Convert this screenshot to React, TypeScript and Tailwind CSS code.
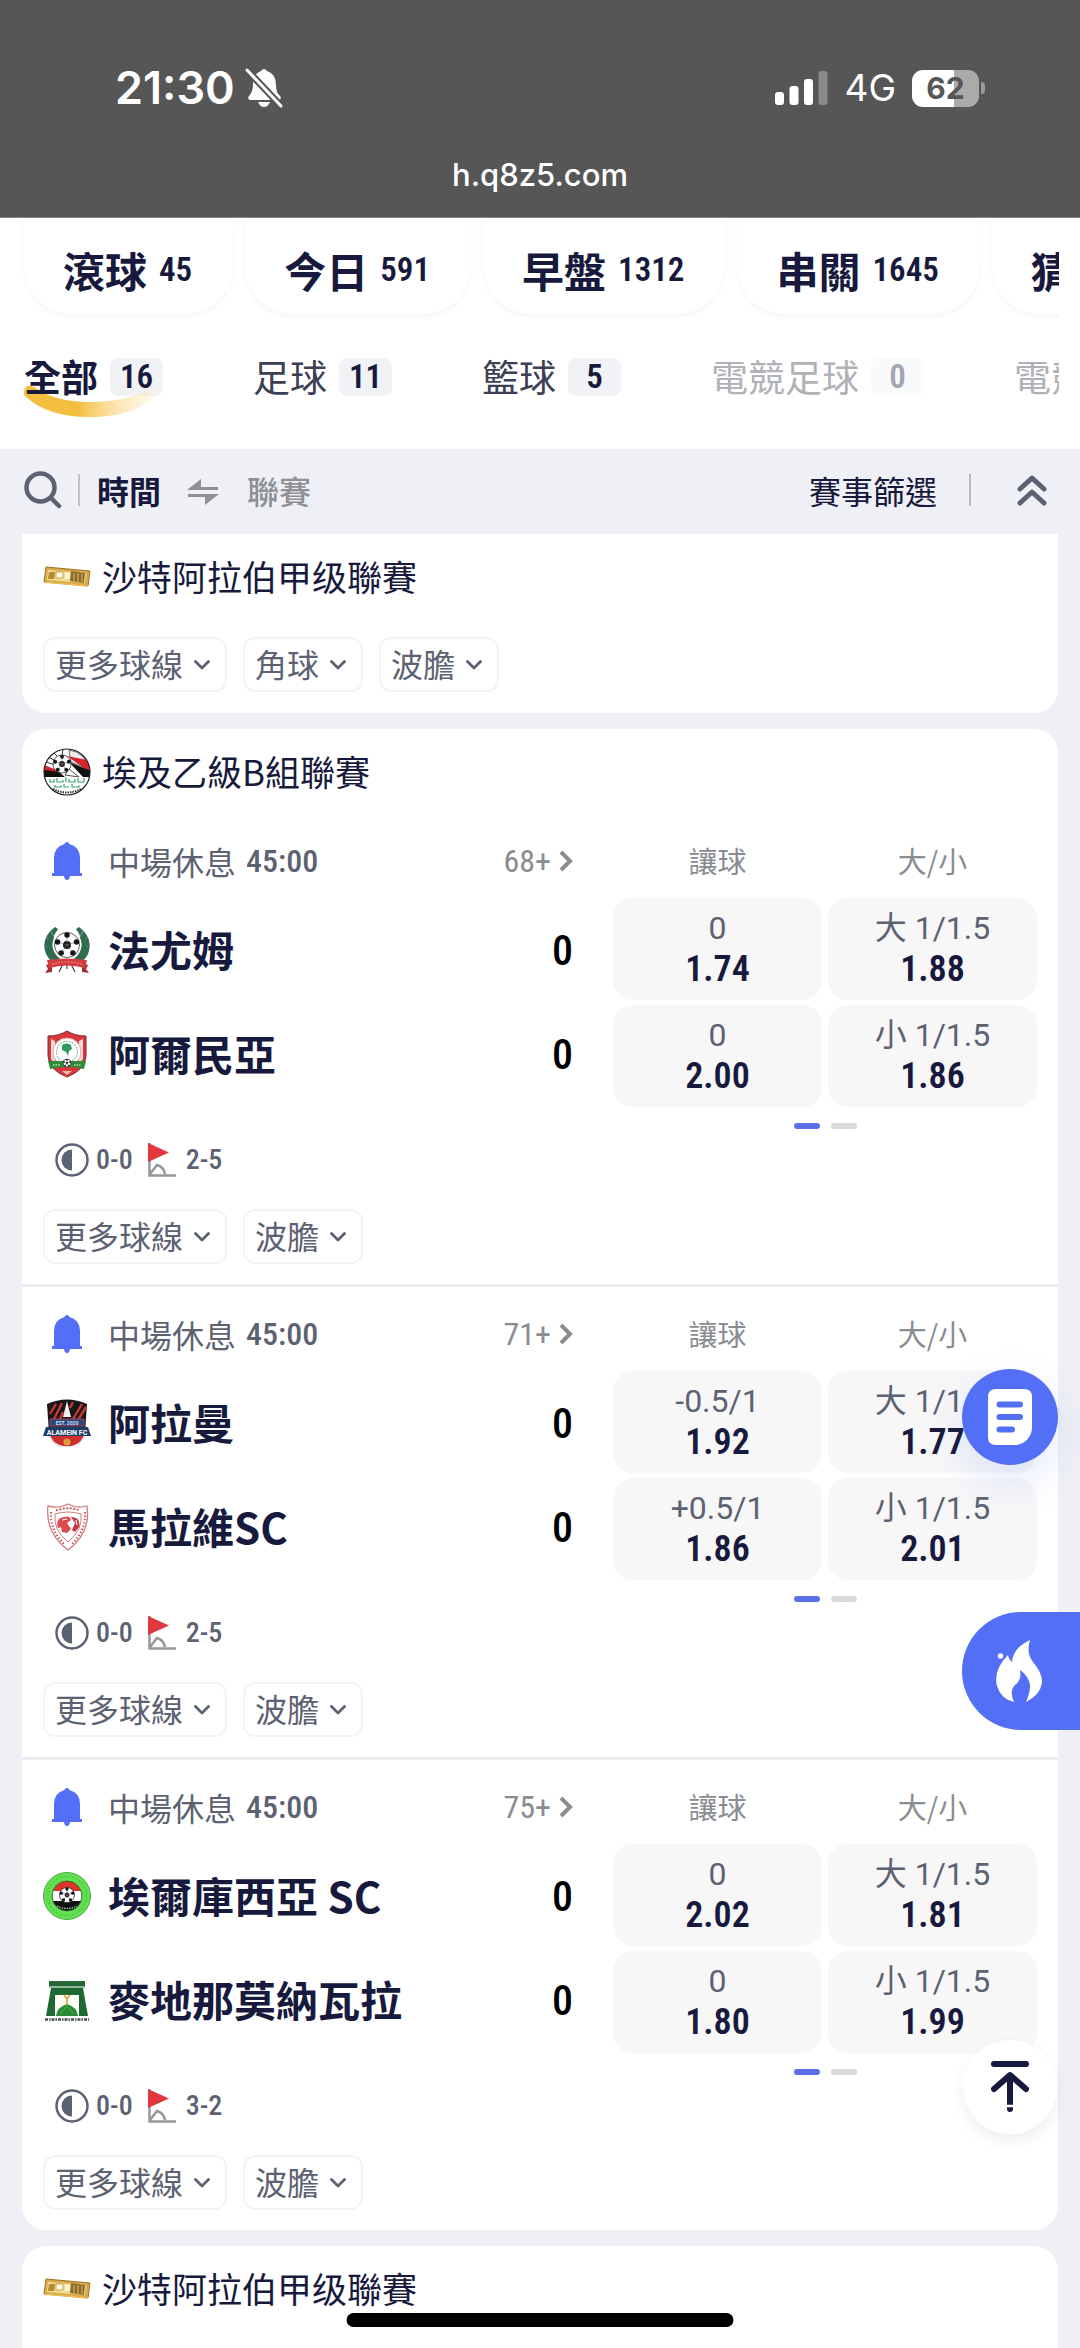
import type { ReactNode } from "react";

const NUM = "font-['Roboto_Condensed',Roboto,sans-serif]";

type Odd = { line: string; price: string };
type Team = { name: string; score: number; crest: ReactNode };
type MatchData = {
  more: string;
  teams: [Team, Team];
  odds: [[Odd, Odd], [Odd, Odd]];
  corners: string;
};

function Ball({ cx, cy, r }: { cx: number; cy: number; r: number }) {
  const spots = [0, 72, 144, 216, 288].map((a) => {
    const t = ((a - 90) * Math.PI) / 180;
    return { x: cx + Math.cos(t) * r * 0.8, y: cy + Math.sin(t) * r * 0.8 };
  });
  return (
    <g>
      <circle cx={cx} cy={cy} r={r} fill="#fff" stroke="#333" strokeWidth="0.8" />
      <circle cx={cx} cy={cy} r={r * 0.32} fill="#15151c" />
      {spots.map((s, i) => (
        <g key={i}>
          <path d={`M${cx} ${cy}L${s.x} ${s.y}`} stroke="#777" strokeWidth="0.6" />
          <circle cx={s.x} cy={s.y} r={r * 0.22} fill="#15151c" />
        </g>
      ))}
    </g>
  );
}

function GoldCrest() {
  return (
    <svg viewBox="0 0 48 48" className="size-12 shrink-0" aria-hidden="true">
      <path d="M3 14 47 18 45 33 1 29Z" fill="#d9ab45" stroke="#9c7426" strokeWidth="1" />
      <path d="M5 17 43 20 42 30 4 27Z" fill="#f2dc9a" />
      <path d="M6 19h6l-1 7H5z" fill="#b98a2d" />
      <path d="M13 19h7v6h-7z" fill="#fffbe8" stroke="#b98a2d" strokeWidth="0.8" />
      <path d="M22 20h5v6h-5z" fill="#fff4cc" />
      <path d="M28 18 42 20 41 30 27 28Z" fill="#8c6c2f" />
      <path d="M31 20v8M35 20v9M39 21v8" stroke="#dcb95e" strokeWidth="1" />
      <path d="M2 29 45 33" stroke="#efc050" strokeWidth="1.5" />
    </svg>
  );
}

function EgyptLeagueCrest() {
  return (
    <svg viewBox="0 0 48 48" className="size-12 shrink-0" aria-hidden="true">
      <defs>
        <clipPath id="egy">
          <circle cx="24" cy="24" r="23" />
        </clipPath>
      </defs>
      <g clipPath="url(#egy)">
        <path d="M0 0h48v48H0z" fill="#fff" />
        <path d="M26 2Q42 4 47 22L28 14Z" fill="#eee" stroke="#333" strokeWidth="0.7" />
        <path d="M10 4 18 12M5 9l12 6M3 14l12 4M20 1l-1 8" stroke="#222" strokeWidth="0.9" />
        <path d="M24 8 44 12 48 25Z" fill="#d5222b" />
        <path d="M26 14 48 23v6H40Z" fill="#111" />
        <path d="M1 17 14 22 18 28H1Z" fill="#d5222b" />
        <path d="M1 22 16 24 22 29H1Z" fill="#111" />
        <path d="M22 27 26 21 36 29Z" fill="#fff" stroke="#222" strokeWidth="0.8" />
        <Ball cx={19} cy={16} r={9} />
        <path d="M1 29h46v18H1z" fill="#fff" />
        <path
          d="M7 31v3h4v-3M14 30v4h6v-2M23 29v5M26 31v3h6v-3M35 30v4h6v-4M12 37v2h6v-2M21 36v3h5M29 36v3h7v-2"
          fill="none"
          stroke="#38a36d"
          strokeWidth="1.2"
        />
        <path d="M10 41q14 7 28 0" fill="none" stroke="#333" strokeWidth="2" strokeDasharray="1.5 1" />
      </g>
      <circle cx="24" cy="24" r="23" fill="none" stroke="#222" strokeWidth="1.2" />
    </svg>
  );
}

function FayoumCrest() {
  return (
    <svg viewBox="0 0 48 48" className="size-12 shrink-0" aria-hidden="true">
      <path d="M12 1Q-3 12 3 28 9 40 22 38L14 30Q4 18 15 3Z" fill="#2f6b4f" />
      <path d="M36 1Q51 12 45 28 39 40 26 38L34 30Q44 18 33 3Z" fill="#2f6b4f" />
      <path d="M8 5 11 11M4 12 9 16M3 20 9 22M40 5 37 11M44 12 39 16M45 20 39 22" stroke="#8fb7a1" strokeWidth="0.8" />
      <path d="M9 10Q2 24 14 34M39 10Q46 24 34 34" stroke="#2f6b4f" strokeWidth="5" fill="none" />
      <Ball cx={24} cy={19} r={12.5} />
      <path d="M20 38 16 46M28 38 32 46M24 36v7" stroke="#444" strokeWidth="1.2" />
      <path d="M3 39 9 37V46L2 47 5 43ZM45 39 39 37V46L46 47 43 43Z" fill="#a92b31" />
      <path d="M4 34Q24 31 44 34L42 42Q24 37 6 42Z" fill="#d23d42" />
      <path d="M9 38Q24 34 39 38" fill="none" stroke="#f08a8a" strokeWidth="1.2" strokeDasharray="1.6 1.6" />
    </svg>
  );
}

function ArmeniaCrest() {
  return (
    <svg viewBox="0 0 48 48" className="size-12 shrink-0" aria-hidden="true">
      <path d="M24 1Q32 6 43 6V26Q42 40 24 47 6 40 5 26V6Q16 6 24 1Z" fill="#d8383c" stroke="#7d2a2a" strokeWidth="1" />
      <path d="M8 9 12 11V34L8 29ZM40 9 36 11V34L40 29Z" fill="#f6d9d8" />
      <circle cx="24" cy="22" r="14" fill="#fff" stroke="#e9a6a4" strokeWidth="1" />
      <circle cx="24" cy="22" r="10.5" fill="none" stroke="#8fc3a0" strokeWidth="1.2" strokeDasharray="2 1" />
      <path d="M19 15q5-3 9 0l1 4-3 2-1 5-2-4-4-2z" fill="#2f9a60" />
      <path d="M5 31 43 31 41 39Q24 35 7 39Z" fill="#2f8a3a" />
      <path d="M10 35h7M31 35h7" stroke="#bde0b0" strokeWidth="1.4" strokeDasharray="1.5 1" />
      <Ball cx={24} cy={33} r={4} />
      <path d="M19 41h10l-5 4z" fill="#f0b7b5" />
    </svg>
  );
}

function AlameinCrest() {
  return (
    <svg viewBox="0 0 48 48" className="size-12 shrink-0" aria-hidden="true">
      <path d="M4 5Q24-4 44 5L42 34Q40 48 24 48 8 48 6 34Z" fill="#191518" />
      <path d="M7 15 13 5M11 20 19 4M17 20 20 13M30 20 39 5M35 21 43 8M27 9 30 3" stroke="#c23a35" strokeWidth="2.4" />
      <path d="M24 2 20 18H28Z" fill="#f1eef0" />
      <path d="M7 20H41V27H7Z" fill="#244a80" stroke="#a8425c" strokeWidth="1" />
      <path d="M6 34H42Q40 47 24 48 8 47 6 34Z" fill="#ce2f2d" stroke="#f2f2f2" strokeWidth="1.6" />
      <circle cx="24" cy="43" r="3.6" fill="#d99c3f" />
      <path d="M3 28H45L48 37H0Z" fill="#1d3d68" />
      <text x="24" y="35.5" textAnchor="middle" fontSize="7" fontWeight="700" fill="#fff" fontFamily="Roboto, sans-serif">
        ALAMEIN FC
      </text>
      <text x="24" y="25.5" textAnchor="middle" fontSize="5" fontWeight="700" fill="#d5deee" fontFamily="Roboto, sans-serif">
        EST. 2020
      </text>
    </svg>
  );
}

function MallawiCrest() {
  return (
    <svg viewBox="0 0 48 48" className="size-12 shrink-0" fill="none" aria-hidden="true">
      <path d="M5 3Q16 6 25 1 34 6 44 3 48 30 25 47 2 30 5 3Z" stroke="#cf7a7d" strokeWidth="1.3" />
      <path d="M12 11Q25 7 38 11 40 27 25 39 10 27 12 11Z" stroke="#cf7a7d" strokeWidth="1" />
      <path d="M8 9Q7 28 22 42M42 9Q43 28 28 42" stroke="#c9575c" strokeWidth="2.2" strokeDasharray="1.4 2" />
      <path d="M13 7.500Q25 3 37 7.500" stroke="#c9575c" strokeWidth="2" strokeDasharray="2 1.5" />
      <path d="M15 25Q12 15 21 14 27 12 28 17L24 20 28 26 24 30 19 29 18 24Z" fill="#dd4a4f" />
      <path d="M28 14Q38 14 36 24L32 29 29 27 32 20Z" fill="#c4383e" />
      <path d="M19 17 24 16M33 17 34 22" stroke="#fff" strokeWidth="1.2" />
    </svg>
  );
}

function KousiaCrest() {
  return (
    <svg viewBox="0 0 48 48" className="size-12 shrink-0" aria-hidden="true">
      <defs>
        <clipPath id="kou">
          <circle cx="24" cy="24" r="15" />
        </clipPath>
      </defs>
      <circle cx="24" cy="24" r="23.500" fill="#62e052" stroke="#4cae42" strokeWidth="1" />
      <circle cx="24" cy="24" r="19.500" fill="none" stroke="#54cc48" strokeWidth="2" strokeDasharray="2 2" />
      <g clipPath="url(#kou)">
        <path d="M8 8h32v11H8z" fill="#df3326" />
        <path d="M8 19h32v10H8z" fill="#fff" />
        <path d="M8 29h32v12H8z" fill="#111" />
        <path d="M14 34q10 5 20 0" fill="none" stroke="#ccc" strokeWidth="1.200" strokeDasharray="1.500 1" />
      </g>
      <circle cx="24" cy="24" r="15" fill="none" stroke="#2f6f2d" strokeWidth="1" />
      <Ball cx={24} cy={23} r={7.500} />
    </svg>
  );
}

function MadinaCrest() {
  return (
    <svg viewBox="0 0 48 48" className="size-12 shrink-0" aria-hidden="true">
      <path d="M6 5H42V10H6Z" fill="#24683a" />
      <path d="M6 10H42V12H6Z" fill="#8fb79a" />
      <path d="M8 12H40L45 40H36V19H12V40H3Z" fill="#1f6a33" />
      <path d="M12 19h24v21H12z" fill="#fffdf7" />
      <path d="M13 40Q14 31 24 28 34 31 35 40Z" fill="#288a34" />
      <path d="M24 29V21M21 19 24 23 27 19" fill="none" stroke="#d6a144" strokeWidth="1.600" />
      <path d="M17 38 24 30 31 38" fill="none" stroke="#5db357" strokeWidth="0.800" />
      <path d="M2 43.500H46" stroke="#43524a" strokeWidth="2.400" strokeDasharray="3 1 1.500 1" />
    </svg>
  );
}

function BellIcon() {
  return (
    <svg viewBox="0 0 30 40" className="h-10 w-[30px]" fill="#536ff6" aria-hidden="true">
      <path d="M13 2q2-2 4 0l.5 1Q28 6 28 17V32H30V35H18q-.5 4-3 4t-3-4H0V32H2V17Q2 6 12.500 3Z" />
    </svg>
  );
}

function Chevron() {
  return (
    <svg viewBox="0 0 16 10" className="mt-1 h-[10px] w-4" fill="none" stroke="#5d6273" strokeWidth="2.800" strokeLinecap="round" strokeLinejoin="round" aria-hidden="true">
      <path d="M1.500 1.500 8 8l6.500-6.500" />
    </svg>
  );
}

function Chips({ items }: { items: string[] }) {
  return (
    <div className="flex gap-4">
      {items.map((t) => (
        <button
          key={t}
          className="flex h-[55px] items-center gap-[11px] rounded-xl border-2 border-[#f4f4f6] bg-white pr-[15px] pb-1 pl-[10px] text-[32px] leading-none text-[#5d6273]"
        >
          <span>{t}</span>
          <Chevron />
        </button>
      ))}
    </div>
  );
}

function LeagueTitle({ crest, name }: { crest: ReactNode; name: string }) {
  return (
    <h2 className="flex h-[85px] items-center gap-[11px] text-[35px] text-[#171a3d]">
      {crest}
      <span>{name}</span>
    </h2>
  );
}

function Match({ m, last }: { m: MatchData; last: boolean }) {
  return (
    <article className={last ? "px-[21px] pb-5" : "border-b-[3px] border-[#ebecf1] px-[21px] pb-5"}>
      <div className="flex gap-10">
        <div className="min-w-0 flex-1">
          <header className="mt-3 flex h-[72px] items-center pb-[2px]">
            <button aria-label="通知" className="flex w-12 justify-center">
              <BellIcon />
            </button>
            <p className="ml-[17px] flex items-center gap-[10px] text-[32px] text-[#5d6273]">
              <span>中場休息</span>
              <span className={`${NUM} font-medium`}>45:00</span>
            </p>
            <a href="#more" className={`ml-auto flex items-center gap-2 text-[32px] text-[#8b8c91] ${NUM}`}>
              <span>{m.more}</span>
              <svg viewBox="0 0 14 22" className="h-[22px] w-[14px]" fill="none" stroke="#8b8c91" strokeWidth="4" aria-hidden="true">
                <path d="M2 2l9 9-9 9" />
              </svg>
            </a>
          </header>
          <div className="flex flex-col">
            {m.teams.map((t) => (
              <div key={t.name} className="flex h-[104px] items-center">
                {t.crest}
                <h3 className="ml-[17px] pb-1 text-[42px] font-bold text-[#171a3d]">{t.name}</h3>
                <span className={`ml-auto text-[42px] font-medium text-black ${NUM}`}>{t.score}</span>
              </div>
            ))}
          </div>
          <div className={`mt-[35px] ml-3 flex h-[38px] items-center text-[28px] font-medium text-[#5d6273] ${NUM}`}>
            <svg viewBox="0 0 34 34" className="mr-[7px] size-[34px]" aria-hidden="true">
              <circle cx="17" cy="17" r="15.500" fill="none" stroke="#5d6273" strokeWidth="2.500" />
              <path d="M17 6.500V27.500A10.500 10.500 0 0 1 17 6.500Z" fill="#5d6273" />
            </svg>
            <span>0-0</span>
            <svg viewBox="0 0 28 34" className="mr-[10px] ml-[15px] h-[34px] w-7" fill="none" aria-hidden="true">
              <path d="M1.500 0V32.500H28M2 31 9 22Q16 24 17 31" stroke="#97989c" strokeWidth="2.500" />
              <path d="M0 0 21 9.500 0 19Z" fill="#e0383e" />
            </svg>
            <span>{m.corners}</span>
          </div>
        </div>
        <div className="w-[424px]">
          <div className="mt-3 grid h-[72px] grid-cols-2 items-center gap-[6px] pb-[2px] text-center text-[29px] text-[#8b8c91]">
            <span>讓球</span>
            <span>大/小</span>
          </div>
          <div className="grid grid-cols-2 gap-x-[6px] gap-y-[5px]">
            {m.odds.flat().map((o, i) => (
              <button key={i} className="flex h-[102px] flex-col items-center justify-center rounded-[20px] bg-[#f7f7f8]">
                <span className="font-[Roboto,'Noto_Sans_CJK_TC',sans-serif] text-[32px] leading-[40px] text-[#5d6273]">{o.line}</span>
                <span className={`text-[36px] leading-[42px] font-semibold text-[#171a3d] ${NUM}`}>{o.price}</span>
              </button>
            ))}
          </div>
          <div className="mt-4 flex justify-center gap-[11px]">
            <span className="h-[6px] w-[26px] rounded-full bg-[#5a70e8]" />
            <span className="h-[6px] w-[26px] rounded-full bg-[#d9d9da]" />
          </div>
        </div>
      </div>
      <div className="mt-[30px]">
        <Chips items={["更多球線", "波膽"]} />
      </div>
    </article>
  );
}

const over = "大 1/1.5";
const under = "小 1/1.5";

const matches: MatchData[] = [
  {
    more: "68+",
    teams: [
      { name: "法尤姆", score: 0, crest: <FayoumCrest /> },
      { name: "阿爾民亞", score: 0, crest: <ArmeniaCrest /> },
    ],
    odds: [
      [{ line: "0", price: "1.74" }, { line: over, price: "1.88" }],
      [{ line: "0", price: "2.00" }, { line: under, price: "1.86" }],
    ],
    corners: "2-5",
  },
  {
    more: "71+",
    teams: [
      { name: "阿拉曼", score: 0, crest: <AlameinCrest /> },
      { name: "馬拉維SC", score: 0, crest: <MallawiCrest /> },
    ],
    odds: [
      [{ line: "-0.5/1", price: "1.92" }, { line: over, price: "1.77" }],
      [{ line: "+0.5/1", price: "1.86" }, { line: under, price: "2.01" }],
    ],
    corners: "2-5",
  },
  {
    more: "75+",
    teams: [
      { name: "埃爾庫西亞 SC", score: 0, crest: <KousiaCrest /> },
      { name: "麥地那莫納瓦拉", score: 0, crest: <MadinaCrest /> },
    ],
    odds: [
      [{ line: "0", price: "2.02" }, { line: over, price: "1.81" }],
      [{ line: "0", price: "1.80" }, { line: under, price: "1.99" }],
    ],
    corners: "3-2",
  },
];

const periods = [
  { name: "滾球", count: "45" },
  { name: "今日", count: "591" },
  { name: "早盤", count: "1312" },
  { name: "串關", count: "1645" },
  { name: "猜", count: "" },
];

const sports = [
  { name: "全部", count: "16", state: "active" },
  { name: "足球", count: "11", state: "on" },
  { name: "籃球", count: "5", state: "on" },
  { name: "電競足球", count: "0", state: "off" },
  { name: "電競", count: "", state: "off" },
];

const sportText: Record<string, string> = {
  active: "font-bold text-[#171a3d]",
  on: "text-[#3c4054]",
  off: "text-[#b1b2b7]",
};

const badgeText: Record<string, string> = {
  active: "bg-[#f0f2f6] text-[#171a3d]",
  on: "bg-[#f0f2f6] text-[#171a3d]",
  off: "bg-[#f9fafb] text-[#a3a5b0]",
};

function StatusBar() {
  return (
    <header className="h-[218px] border-b border-[#8a8a8a] bg-[#565656] font-[Inter,sans-serif] text-white">
      <div className="flex h-[144px] items-end justify-between pr-[95px] pb-[30px] pl-[115px]">
        <div className="flex items-center gap-[10px]">
          <span className="text-[45px] leading-[52px] font-semibold">21:30</span>
          <svg viewBox="0 0 38 40" className="h-10 w-[38px]" aria-hidden="true">
            <path d="M16 3q3-4 6 0Q31 6 31 17q0 8 4 11 2 3-1 4H5q-3-1-1-4 4-4 4-12Q8 6 16 3ZM13 34H25q-2 5-6 5t-6-5Z" fill="#fff" />
            <path d="M1 1 36 38" stroke="#565656" strokeWidth="7" />
            <path d="M2 2 36 38" stroke="#fff" strokeWidth="3" strokeLinecap="round" />
          </svg>
        </div>
        <div className="flex items-center pb-[2px]">
          <svg viewBox="0 0 53 34" className="h-[34px] w-[53px]" fill="#fff" aria-hidden="true">
            <rect x="0" y="21" width="9" height="13" rx="3" />
            <rect x="14.500" y="15" width="9" height="19" rx="3" />
            <rect x="29" y="8" width="9" height="26" rx="3" />
            <rect x="43.500" y="0" width="9" height="34" rx="3" opacity="0.300" />
          </svg>
          <span className="ml-4 text-[37px] leading-[48px]">4G</span>
          <div className="ml-4 flex h-[37px] w-[67px] items-center justify-center rounded-[11px] bg-[linear-gradient(90deg,#fff_63%,#aaaaaa_63%)] text-[30px] font-bold text-[#565656]">
            62
          </div>
          <span className="ml-[2px] h-3 w-1 rounded-r-full bg-[#9a9a9a]" />
        </div>
      </div>
      <p className="text-center text-[31px] leading-[62px] font-medium">h.q8z5.com</p>
    </header>
  );
}

export default function App() {
  return (
    <div className="relative flex min-h-screen flex-col overflow-hidden bg-[#eff0f5] font-['Noto_Sans_CJK_TC',sans-serif]">
      <StatusBar />

      <div className="bg-white pr-[21px] pl-6">
        <nav className="-ml-6 flex gap-3 overflow-hidden pb-5 pl-6" aria-label="時段">
          {periods.map((p) => (
            <button
              key={p.name}
              className="flex h-24 min-w-[200px] shrink-0 items-center gap-3 rounded-b-[48px] pt-2 pr-[41px] pl-[39px] text-[#171a3d] shadow-[0_3px_5px_rgba(20,20,40,0.04)]"
            >
              <span className="text-[42px] leading-[84px] font-bold">{p.name}</span>
              {p.count && <span className={`text-[33px] font-semibold ${NUM}`}>{p.count}</span>}
            </button>
          ))}
        </nav>
        <nav className="flex h-[115px] gap-[90px] overflow-hidden" aria-label="球類">
          {sports.map((s) => (
            <button key={s.name} className="relative flex h-[86px] shrink-0 items-center gap-3">
              {s.state === "active" && (
                <svg viewBox="0 0 136 34" className="absolute top-[51px] left-0 h-[34px] w-[136px]" aria-hidden="true">
                  <defs>
                    <linearGradient id="swoosh">
                      <stop offset="0.400" stopColor="#f4bf40" />
                      <stop offset="1" stopColor="#fdf0cf" stopOpacity="0.300" />
                    </linearGradient>
                  </defs>
                  <path d="M0 6Q2-2 10 2 32 18 70 17 108 16 128 2 136-1 134 8 112 32 66 32 22 32 0 10Z" fill="url(#swoosh)" />
                </svg>
              )}
              <span className={`relative text-[37px] ${sportText[s.state]}`}>{s.name}</span>
              {s.count && (
                <span className={`flex h-[38px] w-[53px] items-center justify-center rounded-lg text-[33px] font-semibold ${NUM} ${badgeText[s.state]}`}>
                  {s.count}
                </span>
              )}
            </button>
          ))}
        </nav>
      </div>

      <div className="flex h-[85px] items-center px-6 pb-1 text-[32px] text-[#171a3d]">
        <button aria-label="搜尋">
          <svg viewBox="0 0 38 38" className="size-[38px]" fill="none" stroke="#5d6273" strokeWidth="4.500" strokeLinecap="round" aria-hidden="true">
            <circle cx="16.500" cy="16.500" r="14" />
            <path d="M27 27l8 8" />
          </svg>
        </button>
        <span className="ml-4 h-8 w-[2px] bg-[#c2c3c8]" />
        <button className="ml-[17px] font-bold">時間</button>
        <svg viewBox="0 0 32 26" className="mt-1 ml-[26px] h-[26px] w-8" fill="#8e9096" aria-hidden="true">
          <path d="M0 11 14 0V8H31V11ZM32 15 18 26V18H1V15Z" />
        </svg>
        <button className="ml-7 font-medium text-[#8e9096]">聯賽</button>
        <button className="ml-auto">賽事篩選</button>
        <span className="ml-8 h-8 w-[2px] bg-[#b9bac0]" />
        <button aria-label="收合" className="mr-[9px] ml-[46px]">
          <svg viewBox="0 0 30 32" className="h-8 w-[30px]" fill="none" stroke="#5d6273" strokeWidth="5" strokeLinecap="round" strokeLinejoin="round" aria-hidden="true">
            <path d="M3 15 15 4 27 15M3 29 15 18 27 29" />
          </svg>
        </button>
      </div>

      <main className="flex flex-1 flex-col gap-4 px-[22px]">
        <section className="rounded-b-3xl bg-white px-[21px] pb-[21px]">
          <LeagueTitle crest={<GoldCrest />} name="沙特阿拉伯甲级聯賽" />
          <div className="pt-[18px]">
            <Chips items={["更多球線", "角球", "波膽"]} />
          </div>
        </section>
        <section className="rounded-3xl bg-white">
          <div className="px-[21px]">
            <LeagueTitle crest={<EgyptLeagueCrest />} name="埃及乙級B組聯賽" />
          </div>
          {matches.map((m, i) => (
            <Match key={m.more} m={m} last={i === matches.length - 1} />
          ))}
        </section>
        <section className="flex-1 rounded-t-3xl bg-white px-[21px]">
          <LeagueTitle crest={<GoldCrest />} name="沙特阿拉伯甲级聯賽" />
        </section>
      </main>

      <button
        aria-label="注單"
        className="fixed right-[22px] bottom-[883px] flex size-24 items-center justify-center rounded-full bg-[#536ff6] shadow-[0_16px_40px_rgba(83,111,246,0.15)]"
      >
        <svg viewBox="0 0 44 56" className="h-14 w-11" aria-hidden="true">
          <path d="M8 0H36Q44 0 44 8V40Q42 53 29 56H8Q0 56 0 48V8Q0 0 8 0Z" fill="#fff" />
          <path d="M11.500 15.500H32M11.500 28H32M11.500 40.500H24" stroke="#536ff6" strokeWidth="6" strokeLinecap="round" />
        </svg>
      </button>
      <button aria-label="熱門" className="fixed right-0 bottom-[618px] flex h-[118px] w-[118px] items-center rounded-l-full bg-[#536ff6] pl-[33px]">
        <svg viewBox="0 0 48 62" className="h-[62px] w-12" fill="#fff" aria-hidden="true">
          <circle cx="5.500" cy="16" r="2.800" />
          <path d="M35 0Q31 13 38 22 48 34 47 43 45 55 31 62 37 48 34 41 31 34 25 30 27 40 20 45 14 51 19 62 6 59 2 46-2 30 13 15 14 20 17 22 18 8 35 0Z" />
        </svg>
      </button>
      <button aria-label="回到頂部" className="fixed right-[23px] bottom-[214px] flex size-[94px] items-center justify-center rounded-full bg-white shadow-[0_6px_16px_rgba(0,0,0,0.07)]">
        <svg viewBox="0 0 38 52" className="h-[52px] w-[38px]" fill="none" stroke="#171a3d" strokeWidth="6" strokeLinecap="round" strokeLinejoin="round" aria-hidden="true">
          <path d="M3 3H35M3 28 19 14 35 28M19 16V48" />
          <path d="M12 45H26" stroke="#fff" strokeWidth="2.500" strokeLinecap="butt" />
        </svg>
      </button>
      <div className="fixed bottom-[21px] left-1/2 h-[14px] w-[387px] -translate-x-1/2 rounded-full bg-black" />
    </div>
  );
}
